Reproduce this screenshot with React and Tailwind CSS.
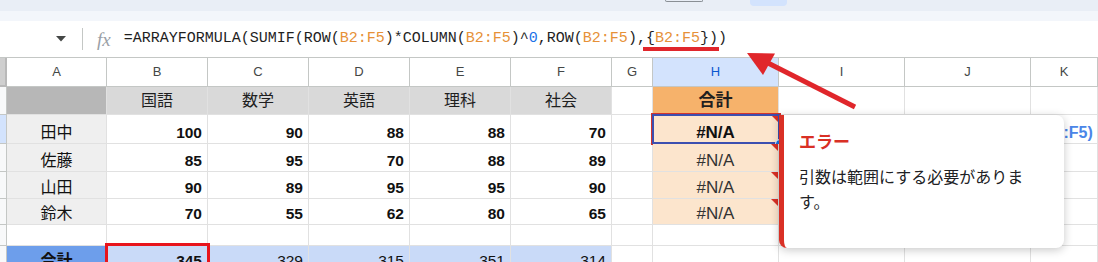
import React from 'react';

const colW = ['w-[7px]', 'w-[100px]', 'w-[101px]', 'w-[101px]', 'w-[101px]', 'w-[101px]', 'w-[101px]', 'w-[41px]', 'w-[126px]', 'w-[126px]', 'w-[126px]', 'w-[67px]'];
const letters = ['A', 'B', 'C', 'D', 'E', 'F', 'G', 'H', 'I', 'J', 'K'];
const subjects = ['国語', '数学', '英語', '理科', '社会'];
const students = [
  { name: '田中', scores: [100, 90, 88, 88, 70], h: 'h-[29px]' },
  { name: '佐藤', scores: [85, 95, 70, 88, 89], h: 'h-[28px]' },
  { name: '山田', scores: [90, 89, 95, 95, 90], h: 'h-[27px]' },
  { name: '鈴木', scores: [70, 55, 62, 80, 65], h: 'h-[26px]' },
];
const totals = [345, 329, 315, 351, 314];

const font = "font-['Liberation_Sans','Noto_Sans_CJK_JP',sans-serif]";

function Cell({ i, className = '', children }) {
  return (
    <div className={`${colW[i]} shrink-0 flex border-r border-b border-[#e1e1e1] ${className}`}>
      {children}
    </div>
  );
}

function RowHead({ active }) {
  return <div className={`w-[7px] shrink-0 border-r border-b border-[#c4c7c5] ${active ? 'bg-[#d3e3fd]' : 'bg-[#f8f9fa]'}`} />;
}

function ErrorMark() {
  return <span className="absolute top-0 right-0 w-0 h-0 border-t-[7px] border-l-[7px] border-t-[#d93025] border-l-transparent" />;
}

function Formula() {
  const ref = (t) => <span className="text-[#e69138]">{t}</span>;
  return (
    <div className="relative ml-[13px] font-['Liberation_Mono',monospace] text-[15px] text-[#1f1f1f] whitespace-nowrap">
      =ARRAYFORMULA(SUMIF(ROW({ref('B2:F5')})*COLUMN({ref('B2:F5')})^<span className="text-[#1a73e8]">0</span>,ROW({ref('B2:F5')}),{'{'}{ref('B2:F5')}{'}'}))
      <div className="absolute left-[519px] top-[19px] w-[76px] h-[4px] bg-[#e0262b]" />
    </div>
  );
}

export default function App() {
  return (
    <div className={`relative w-[1098px] h-[262px] overflow-hidden bg-white ${font}`}>
      <div className="h-[11px] bg-[#e9eef6] flex items-start">
        <div className="ml-[665px] w-[38px] h-[2px] border-b border-x border-[#8a8f95] rounded-b" />
        <div className="ml-[47px] w-[37px] h-[6px] bg-[#d3e3fd] rounded-b" />
      </div>
      <div className="h-[10px] bg-[#f3f6fb]" />

      <div className="h-[36px] flex items-center">
        <svg className="ml-[56px]" width="10" height="6" viewBox="0 0 10 6">
          <path d="M0 0h10L5 5.5z" fill="#444746" />
        </svg>
        <div className="ml-[16px] w-px h-[22px] bg-[#c4c7c5]" />
        <span className="ml-[14px] font-['Liberation_Serif',serif] italic text-[19px] leading-none text-[#9aa0a6]">fx</span>
        <Formula />
      </div>

      <div className="flex h-[30px] border-t border-[#c4c7c5] text-[13px] text-[#444746]">
        <div className="w-[7px] shrink-0 bg-[#cfcfcf] border-r-2 border-b-2 border-[#b9b9b9]" />
        {letters.map((l, k) => (
          <div key={l} className={`${colW[k + 1]} shrink-0 flex items-center justify-center border-r border-b border-[#c4c7c5] ${l === 'H' ? 'bg-[#d3e3fd] text-[#0b57d0]' : 'bg-white'}`}>
            {l}
          </div>
        ))}
      </div>

      <div className="flex h-[28px] text-[16px] text-[#1f1f1f]">
        <RowHead />
        <Cell i={1} className="bg-[#b7b7b7]" />
        {subjects.map((s, k) => (
          <Cell key={s} i={k + 2} className="bg-[#d9d9d9] items-center justify-center">{s}</Cell>
        ))}
        <Cell i={7} />
        <Cell i={8} className="bg-[#f6b26b] items-center justify-center font-bold text-[17px]">合計</Cell>
        <Cell i={9} />
        <Cell i={10} />
        <Cell i={11} />
      </div>

      {students.map((st, r) => (
        <div key={st.name} className={`flex ${st.h} text-[15.5px] text-[#111] leading-[20px]`}>
          <RowHead active={r === 0} />
          <Cell i={1} className="bg-[#efefef] items-end justify-center text-[16px]">{st.name}</Cell>
          {st.scores.map((v, k) => (
            <Cell key={k} i={k + 2} className="items-end justify-end pr-[5px] font-bold">{v}</Cell>
          ))}
          <Cell i={7} />
          <Cell i={8} className={`relative bg-[#fce5cd] items-end justify-center text-[17px] ${r === 0 ? 'font-bold' : 'text-[#333]'}`}>
            #N/A
            <ErrorMark />
            {r === 0 && (
              <>
                <div className="absolute -left-[2px] -top-[2px] w-[130px] h-[32px] border border-[#d0342c]">
                  <div className="w-full h-full border-2 border-[#3c4fb0]" />
                </div>
                <span className="absolute -right-[6px] -bottom-[5px] w-[9px] h-[9px] rounded-full bg-[#1a73e8] border border-white" />
              </>
            )}
          </Cell>
          <Cell i={9} />
          <Cell i={10} />
          <Cell i={11} className="items-end pl-[12px] whitespace-nowrap overflow-hidden font-bold text-[16px] text-[#4a86e8]">
            {r === 0 ? 'B2:F5)' : ''}
          </Cell>
        </div>
      ))}

      <div className="flex h-[21px]">
        <RowHead />
        {colW.slice(1).map((_, k) => <Cell key={k} i={k + 1} />)}
      </div>

      <div className="flex h-[26px] text-[15.5px] text-[#111] leading-[20px]">
        <RowHead />
        <Cell i={1} className="bg-[#6d9eeb] items-end justify-center font-bold text-[16px]">合計</Cell>
        {totals.map((v, k) => (
          <Cell key={k} i={k + 2} className={`bg-[#c9daf8] items-end justify-end pr-[5px] ${k === 0 ? 'font-bold' : ''}`}>{v}</Cell>
        ))}
        {colW.slice(7).map((_, k) => <Cell key={k} i={k + 7} />)}
      </div>

      <div className="absolute left-[105px] top-[243px] w-[105px] h-[32px] border-[3px] border-[#e8141c]" />

      <div className="absolute left-[779px] top-[115px] w-[285px] h-[133px] bg-white rounded-r-lg rounded-bl-lg border-l-[5px] border-[#d93025] shadow-[0_2px_10px_rgba(0,0,0,0.22)] pl-[15px] pt-[16px]">
        <div className="text-[17px] leading-[24px] font-bold text-[#d93025]">エラー</div>
        <div className="mt-[10px] w-[232px] text-[16px] leading-[25px] text-[#202124]">引数は範囲にする必要があります。</div>
      </div>

      <svg className="absolute left-0 top-0 pointer-events-none" width="1098" height="262">
        <line x1="855" y1="107" x2="768" y2="63" stroke="#e0262b" strokeWidth="5" />
        <path d="M747 53L775 53.5L763 75z" fill="#e0262b" />
      </svg>
    </div>
  );
}
